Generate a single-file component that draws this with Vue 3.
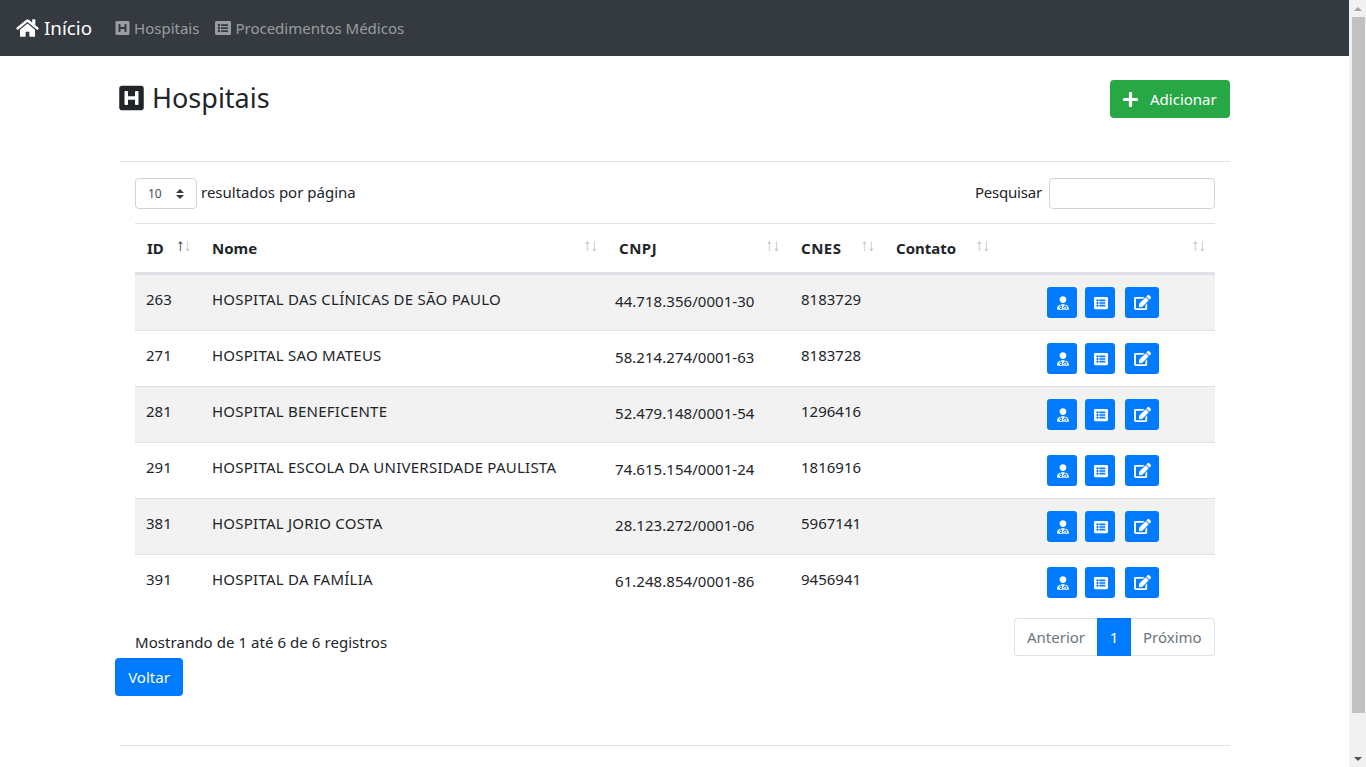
<script setup>
const p = {
  home: 'M280.37 148.26L96 300.11V464a16 16 0 0 0 16 16l112.06-.29a16 16 0 0 0 15.92-16V368a16 16 0 0 1 16-16h64a16 16 0 0 1 16 16v95.64a16 16 0 0 0 16 16.05L464 480a16 16 0 0 0 16-16V300L295.67 148.26a12.19 12.19 0 0 0-15.3 0zM571.6 251.47L488 182.56V44.05a12 12 0 0 0-12-12h-56a12 12 0 0 0-12 12v72.61L318.47 43a48 48 0 0 0-61 0L4.34 251.47a12 12 0 0 0-1.6 16.9l25.5 31A12 12 0 0 0 45.15 301l235.22-193.74a12.19 12.19 0 0 1 15.3 0L530.9 301a12 12 0 0 0 16.9-1.6l25.5-31a12 12 0 0 0-1.7-16.93z',
  h: 'M448 80v352c0 26.51-21.49 48-48 48H48c-26.51 0-48-21.49-48-48V80c0-26.51 21.49-48 48-48h352c26.51 0 48 21.49 48 48zm-112 48h-32c-8.837 0-16 7.163-16 16v80H160v-80c0-8.837-7.163-16-16-16h-32c-8.837 0-16 7.163-16 16v224c0 8.837 7.163 16 16 16h32c8.837 0 16-7.163 16-16v-80h128v80c0 8.837 7.163 16 16 16h32c8.837 0 16-7.163 16-16V144c0-8.837-7.163-16-16-16z',
  list: 'M464 480H48c-26.51 0-48-21.49-48-48V80c0-26.51 21.49-48 48-48h416c26.51 0 48 21.49 48 48v352c0 26.51-21.49 48-48 48zM128 120c-22.091 0-40 17.909-40 40s17.909 40 40 40 40-17.909 40-40-17.909-40-40-40zm0 96c-22.091 0-40 17.909-40 40s17.909 40 40 40 40-17.909 40-40-17.909-40-40-40zm0 96c-22.091 0-40 17.909-40 40s17.909 40 40 40 40-17.909 40-40-17.909-40-40-40zm288-136v-32c0-6.627-5.373-12-12-12H204c-6.627 0-12 5.373-12 12v32c0 6.627 5.373 12 12 12h200c6.627 0 12-5.373 12-12zm0 96v-32c0-6.627-5.373-12-12-12H204c-6.627 0-12 5.373-12 12v32c0 6.627 5.373 12 12 12h200c6.627 0 12-5.373 12-12zm0 96v-32c0-6.627-5.373-12-12-12H204c-6.627 0-12 5.373-12 12v32c0 6.627 5.373 12 12 12h200c6.627 0 12-5.373 12-12z',
  plus: 'M416 208H272V64c0-17.67-14.33-32-32-32h-32c-17.67 0-32 14.33-32 32v144H32c-17.67 0-32 14.33-32 32v32c0 17.67 14.33 32 32 32h144v144c0 17.67 14.33 32 32 32h32c17.67 0 32-14.33 32-32V304h144c17.67 0 32-14.33 32-32v-32c0-17.67-14.33-32-32-32z',
  user: 'M224 256c70.7 0 128-57.3 128-128S294.7 0 224 0 96 57.3 96 128s57.3 128 128 128zm-96 55.2C54 332.9 0 401.3 0 482.7 0 498.9 13.1 512 29.3 512h389.4c16.2 0 29.3-13.1 29.3-29.3 0-81.4-54-149.8-128-171.5V362c27.6 7.1 48 32.2 48 62v40c0 8.8-7.2 16-16 16h-16c-8.8 0-16-7.2-16-16s7.2-16 16-16v-24c0-17.7-14.3-32-32-32s-32 14.3-32 32v24c8.8 0 16 7.2 16 16s-7.2 16-16 16h-16c-8.8 0-16-7.2-16-16v-40c0-29.8 20.4-54.9 48-62v-57.1c-6-.6-12.1-.9-18.3-.9h-91.4c-6.2 0-12.3.3-18.3.9v65.4c23.1 6.9 40 28.3 40 53.7 0 30.9-25.1 56-56 56s-56-25.1-56-56c0-25.4 16.9-46.8 40-53.7v-65.4zM144 448a24 24 0 1 0 0-48 24 24 0 1 0 0 48z',
  edit: 'M402.6 83.2l90.2 90.2c3.8 3.8 3.8 10 0 13.8L274.4 405.6l-92.8 10.3c-12.4 1.4-22.9-9.1-21.5-21.5l10.3-92.8L388.8 83.2c3.8-3.8 10-3.8 13.8 0zm162-22.9l-48.8-48.8c-15.2-15.2-39.9-15.2-55.2 0l-35.4 35.4c-3.8 3.8-3.8 10 0 13.8l90.2 90.2c3.8 3.8 10 3.8 13.8 0l35.4-35.4c15.2-15.3 15.2-40 0-55.2zM384 346.2V448H64V128h229.8c3.2 0 6.2-1.3 8.5-3.5l40-40c7.6-7.6 2.2-20.5-8.5-20.5H48C21.5 64 0 85.5 0 112v352c0 26.5 21.5 48 48 48h352c26.5 0 48-21.5 48-48V306.2c0-10.7-12.9-16-20.5-8.5l-40 40c-2.2 2.3-3.5 5.3-3.5 8.5z'
}
const columns = ['ID', 'Nome', 'CNPJ', 'CNES', 'Contato', '']
const rows = [
  [263, 'HOSPITAL DAS CLÍNICAS DE SÃO PAULO', '44.718.356/0001-30', '8183729'],
  [271, 'HOSPITAL SAO MATEUS', '58.214.274/0001-63', '8183728'],
  [281, 'HOSPITAL BENEFICENTE', '52.479.148/0001-54', '1296416'],
  [291, 'HOSPITAL ESCOLA DA UNIVERSIDADE PAULISTA', '74.615.154/0001-24', '1816916'],
  [381, 'HOSPITAL JORIO COSTA', '28.123.272/0001-06', '5967141'],
  [391, 'HOSPITAL DA FAMÍLIA', '61.248.854/0001-86', '9456941']
]
</script>

<template>
  <div class="shell">
    <div class="page">
      <nav class="navbar">
        <a class="brand">
          <svg class="brand-icon" viewBox="0 0 576 512"><path :d="p.home" /></svg>Início
        </a>
        <a class="nav-link"><svg class="nav-h" viewBox="0 0 448 512"><path :d="p.h" /></svg>Hospitais</a>
        <a class="nav-link"><svg class="nav-l" viewBox="0 0 512 512"><path :d="p.list" /></svg>Procedimentos Médicos</a>
      </nav>

      <main class="container">
        <header class="title-row">
          <h3 class="title"><svg class="title-icon" viewBox="0 0 448 512"><path :d="p.h" /></svg>Hospitais</h3>
          <button class="btn success"><svg class="plus" viewBox="0 0 448 512"><path :d="p.plus" /></svg>Adicionar</button>
        </header>
        <hr class="rule" />

        <section class="panel">
          <div class="tools">
            <label class="length">
              <select class="select"><option>10</option></select>
              <span>resultados por página</span>
            </label>
            <label class="search">
              <span>Pesquisar</span>
              <input class="input" type="search" />
            </label>
          </div>

          <table class="table">
            <colgroup>
              <col class="c1" /><col class="c2" /><col class="c3" /><col class="c4" /><col class="c5" /><col class="c6" />
            </colgroup>
            <thead>
              <tr>
                <th v-for="(c, i) in columns" :key="i" :class="{ upper: i === 2 || i === 3 }">
                  {{ c }}
                  <span class="sort"><span :class="{ on: i === 0 }">↑</span><span>↓</span></span>
                </th>
              </tr>
            </thead>
            <tbody>
              <tr v-for="r in rows" :key="r[0]">
                <td class="id">{{ r[0] }}</td>
                <td class="name">{{ r[1] }}</td>
                <td class="cnpj">{{ r[2] }}</td>
                <td>{{ r[3] }}</td>
                <td></td>
                <td class="actions">
                  <div class="action-group">
                    <button class="act w30"><svg class="ic-user" viewBox="0 0 448 512"><path :d="p.user" /></svg></button>
                    <button class="act w30"><svg class="ic-list" viewBox="0 0 512 512"><path :d="p.list" /></svg></button>
                    <button class="act w34"><svg class="ic-edit" viewBox="0 0 576 512"><path :d="p.edit" /></svg></button>
                  </div>
                </td>
              </tr>
            </tbody>
          </table>

          <div class="table-foot">
            <div class="info">Mostrando de 1 até 6 de 6 registros</div>
            <ul class="pager">
              <li class="pg first">Anterior</li>
              <li class="pg current">1</li>
              <li class="pg last">Próximo</li>
            </ul>
          </div>
        </section>

        <button class="btn primary back">Voltar</button>
        <hr class="rule bottom" />
      </main>
    </div>

    <aside class="scrollbar">
      <span class="arrow up"></span>
      <span class="thumb"></span>
      <span class="arrow down"></span>
    </aside>
  </div>
</template>

<style>
html, body { margin: 0; height: 100%; overflow: hidden; background: #fff; }
</style>

<style scoped>
* { box-sizing: border-box; }
.shell {
  display: flex;
  height: 767px;
  overflow: hidden;
  font-family: "Noto Sans", "Open Sans", "Liberation Sans", sans-serif;
  font-size: 15px;
  line-height: 24px;
  color: #212529;
  background: #fff;
}
.page { flex: 1; min-width: 0; }
.navbar {
  height: 56px;
  background: #343a40;
  display: flex;
  align-items: center;
  padding: 0 16px;
}
.brand {
  display: flex;
  align-items: center;
  color: #fff;
  font-size: 18.8px;
  margin-right: 23px;
}
.brand-icon { width: 23px; height: 20px; fill: #fff; margin-right: 5px; }
.nav-link {
  display: flex;
  align-items: center;
  color: rgba(255, 255, 255, .5);
  margin-right: 16px;
}
.nav-link svg { fill: rgba(255, 255, 255, .5); height: 16px; margin-right: 4px; }
.nav-h { width: 15px; }
.nav-l { width: 16px; }
.container { width: 1110px; margin-left: 120px; padding-top: 24px; }
.title-row { display: flex; justify-content: space-between; height: 38px; }
.title {
  margin: -2px 0 0 -1px;
  font-size: 27px;
  font-weight: 400;
  line-height: 36px;
  display: flex;
  align-items: center;
}
.title-icon { width: 25px; height: 28px; fill: #212529; margin-right: 8px; }
.btn {
  font: inherit;
  border: 0;
  border-radius: 4px;
  height: 38px;
  color: #fff;
  display: flex;
  align-items: center;
  padding: 0;
}
.success { width: 120px; background: #28a745; padding-left: 13px; }
.plus { width: 15px; height: 17px; fill: #fff; margin-right: 12px; }
.rule { margin: 0; border: 0; border-top: 1px solid #e2e4e7; }
.title-row + .rule { margin-top: 43px; }
.panel { padding: 16px 15px 0; }
.tools { display: flex; justify-content: space-between; height: 45px; }
.length, .search { display: flex; align-items: flex-start; }
.length span { margin: 2px 0 0 4px; }
.search span { margin: 2px 7px 0 0; letter-spacing: -.2px; }
.select {
  width: 62px;
  height: 31px;
  border: 1px solid #ced4da;
  border-radius: 4px;
  background: #fff url("data:image/svg+xml,%3csvg xmlns='http://www.w3.org/2000/svg' width='4' height='5' viewBox='0 0 4 5'%3e%3cpath fill='%23343a40' d='M2 0L0 2h4zm0 5L0 3h4z'/%3e%3c/svg%3e") no-repeat right 12px center / 8px 10px;
  appearance: none;
  padding: 0 0 0 12px;
  font: 12px "Noto Sans", sans-serif;
  color: #495057;
}
.input {
  width: 166px;
  height: 31px;
  border: 1px solid #ced4da;
  border-radius: 4px;
  background: #fff;
}
.table {
  width: 1080px;
  table-layout: fixed;
  border-collapse: separate;
  border-spacing: 0;
}
.c1 { width: 65px; }
.c2 { width: 407px; }
.c3 { width: 182px; }
.c4 { width: 95px; }
.c5 { width: 115px; }
.c6 { width: 216px; }
th {
  position: relative;
  height: 52px;
  padding: 12px;
  text-align: left;
  vertical-align: top;
  font-weight: 700;
  border-top: 1px solid #dee2e6;
  border-bottom: 3px solid #dee2e6;
}
.upper { letter-spacing: .5px; }
.sort {
  position: absolute;
  right: 10px;
  top: 9px;
  font-weight: 400;
  font-size: 17px;
  letter-spacing: -1.5px;
  color: #212529;
}
.sort span { opacity: .3; }
.sort .on { opacity: 1; }
td {
  height: 56px;
  padding: 12px;
  vertical-align: top;
  border-bottom: 1px solid #dee2e6;
}
tbody tr:nth-child(odd) td { background: #f2f2f2; }
tbody tr:last-child td { border-bottom: 0; height: 55px; }
.id { padding-left: 11px; }
.name { letter-spacing: .24px; }
.cnpj { padding: 14px 0 0 8px; letter-spacing: .05px; }
.actions { padding-left: 48px; padding-right: 0; }
.action-group { display: flex; gap: 8px; }
.act {
  height: 31px;
  border: 0;
  padding: 0;
  border-radius: 3px;
  background: #007bff;
  display: flex;
  align-items: center;
  justify-content: center;
}
.act svg { fill: #fff; }
.w30 { width: 30px; }
.w34 { width: 34px; margin-left: 2px; }
.ic-user { width: 12px; height: 14px; margin-left: 1px; }
.ic-list { width: 14px; height: 14px; margin-left: 1px; }
.ic-edit { width: 17px; height: 15px; }
.table-foot { display: flex; justify-content: space-between; padding-top: 8px; }
.info { padding-top: 12px; letter-spacing: .06px; }
.pager { display: flex; list-style: none; margin: 0 0 2px; padding: 0; height: 38px; }
.pg {
  height: 38px;
  padding: 0 12px;
  line-height: 36px;
  color: #6c757d;
  border: 1px solid #dee2e6;
}
.first { width: 83px; border-right: 0; border-radius: 4px 0 0 4px; }
.current { width: 34px; background: #007bff; border-color: #007bff; color: #fff; text-align: center; padding: 0; }
.last { width: 84px; border-left: 0; border-radius: 0 4px 4px 0; }
.primary { background: #007bff; margin-left: -5px; width: 68px; justify-content: center; }
.bottom { margin-top: 49px; }
.scrollbar {
  width: 17px;
  height: 767px;
  background: #f1f1f1;
  display: flex;
  flex-direction: column;
  align-items: center;
}
.thumb { display: block; width: 13px; height: 696px; background: #c1c1c1; margin-left: 1px; flex: none; }
.arrow { display: block; width: 0; height: 0; border-left: 4px solid transparent; border-right: 4px solid transparent; flex: none; }
.up { margin: 7px 0 6px; border-bottom: 4px solid #a3a3a3; }
.down { margin-top: 44px; border-top: 4px solid #505050; }
</style>
